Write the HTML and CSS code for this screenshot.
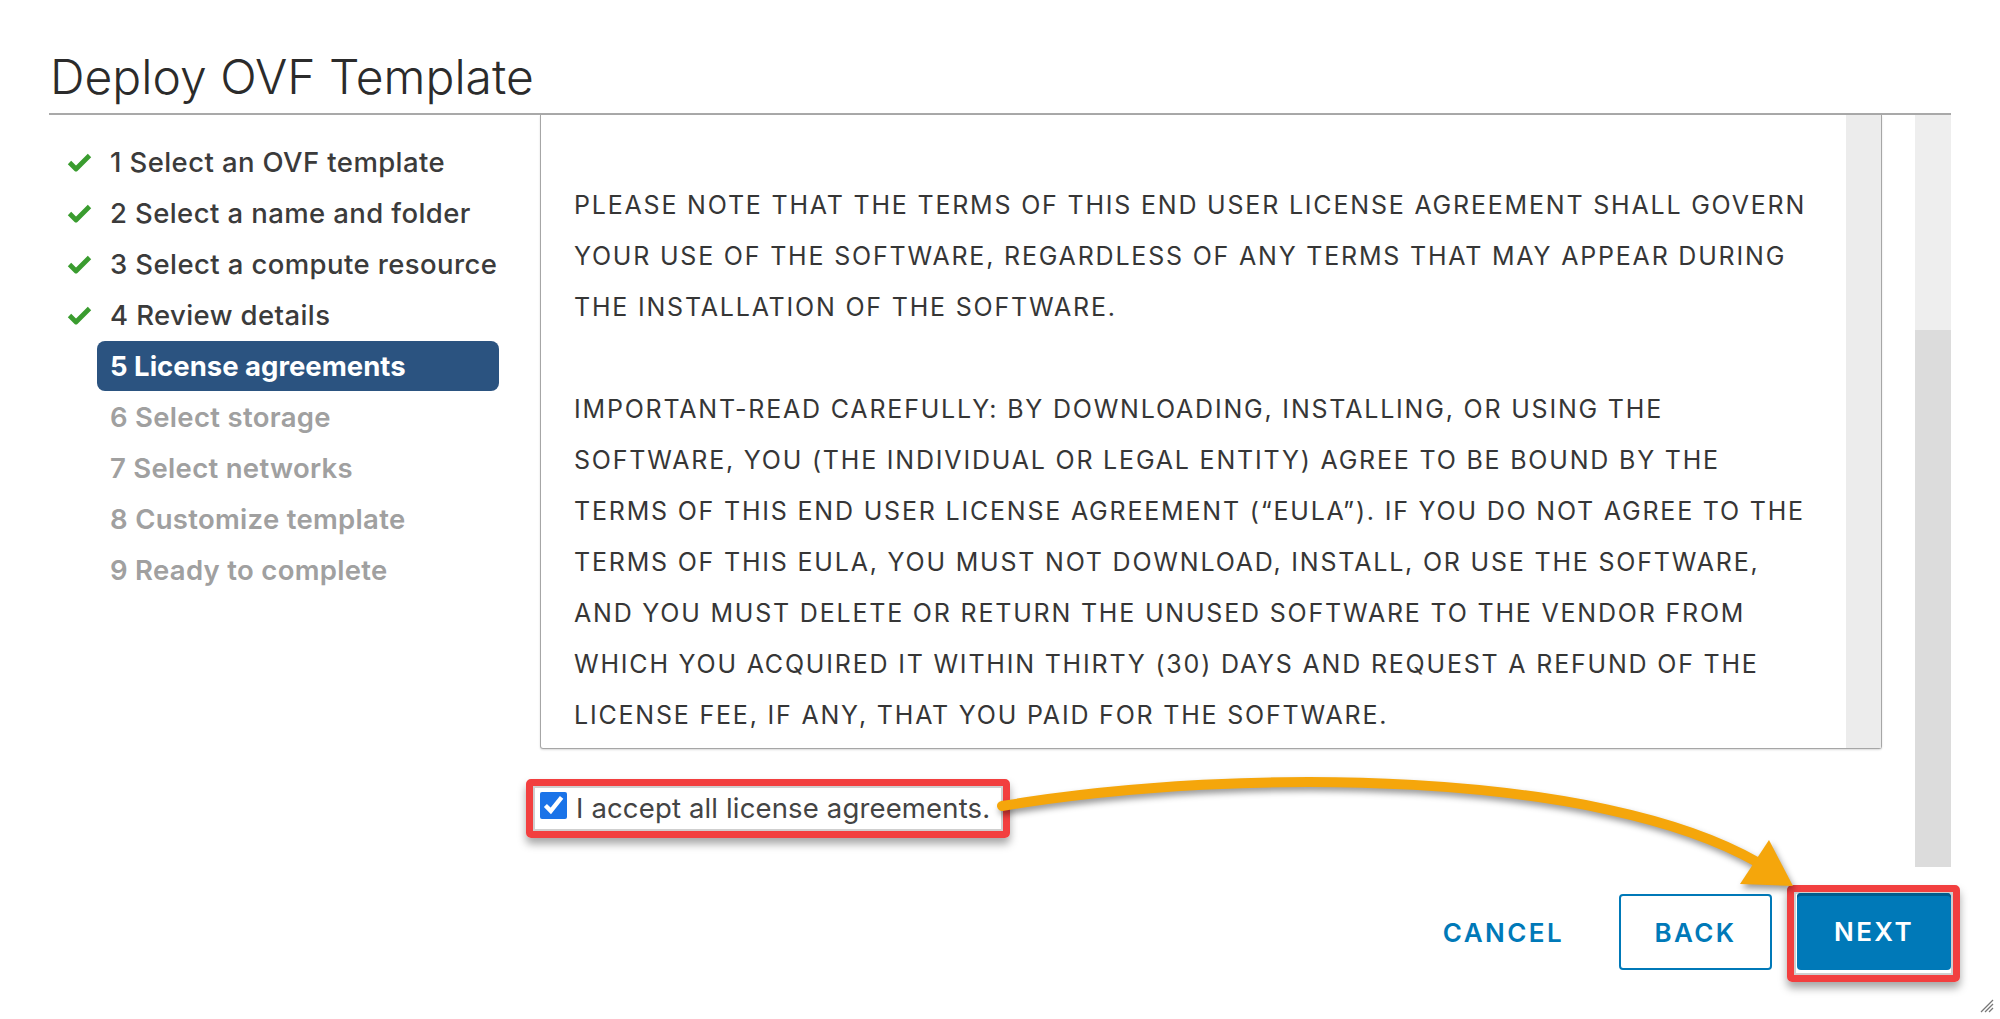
FILE: index.html
```html
<!DOCTYPE html>
<html lang="en">
<head>
<meta charset="utf-8">
<title>Deploy OVF Template</title>
<link rel="stylesheet" href="styles.css">
</head>
<body>
<div class="dialog">
  <header class="header"><h1 class="title">Deploy OVF Template</h1></header>
  <div class="main">
    <nav class="nav">
      <ol class="steps">
        <li class="step done"><svg class="check" viewBox="0 0 25 19"><polyline points="2.5,9.5 9,16 22.5,2.5"/></svg><span>1 Select an OVF template</span></li>
        <li class="step done"><svg class="check" viewBox="0 0 25 19"><polyline points="2.5,9.5 9,16 22.5,2.5"/></svg><span>2 Select a name and folder</span></li>
        <li class="step done"><svg class="check" viewBox="0 0 25 19"><polyline points="2.5,9.5 9,16 22.5,2.5"/></svg><span>3 Select a compute resource</span></li>
        <li class="step done"><svg class="check" viewBox="0 0 25 19"><polyline points="2.5,9.5 9,16 22.5,2.5"/></svg><span>4 Review details</span></li>
        <li class="step current"><span>5 License agreements</span></li>
        <li class="step todo"><span>6 Select storage</span></li>
        <li class="step todo"><span>7 Select networks</span></li>
        <li class="step todo"><span>8 Customize template</span></li>
        <li class="step todo"><span>9 Ready to complete</span></li>
      </ol>
    </nav>
    <section class="pane">
      <div class="pane-content">
        <div class="eula">
          <div class="eula-text">
            <p>PLEASE NOTE THAT THE TERMS OF THIS END USER LICENSE AGREEMENT SHALL GOVERN<br>YOUR USE OF THE SOFTWARE, REGARDLESS OF ANY TERMS THAT MAY APPEAR DURING<br>THE INSTALLATION OF THE SOFTWARE.</p>
            <p>IMPORTANT-READ CAREFULLY: BY DOWNLOADING, INSTALLING, OR USING THE<br>SOFTWARE, YOU (THE INDIVIDUAL OR LEGAL ENTITY) AGREE TO BE BOUND BY THE<br>TERMS OF THIS END USER LICENSE AGREEMENT (“EULA”). IF YOU DO NOT AGREE TO THE<br>TERMS OF THIS EULA, YOU MUST NOT DOWNLOAD, INSTALL, OR USE THE SOFTWARE,<br>AND YOU MUST DELETE OR RETURN THE UNUSED SOFTWARE TO THE VENDOR FROM<br>WHICH YOU ACQUIRED IT WITHIN THIRTY (30) DAYS AND REQUEST A REFUND OF THE<br>LICENSE FEE, IF ANY, THAT YOU PAID FOR THE SOFTWARE.</p>
          </div>
          <div class="eula-scroll"></div>
        </div>
        <label class="accept callout"><input type="checkbox" checked><span class="accept-text">I accept all license agreements.</span></label>
      </div>
      <div class="vscroll"><div class="vthumb"></div></div>
    </section>
  </div>
  <footer class="footer">
    <button class="btn btn-flat">CANCEL</button>
    <button class="btn btn-outline">BACK</button>
    <span class="callout callout-next"><button class="btn btn-primary">NEXT</button></span>
  </footer>
  <svg class="arrow" viewBox="0 0 2000 1019">
    <path class="arrow-line" d="M1002 806 C1250 765 1600 772 1757 862"/>
    <polygon class="arrow-head" points="1793,886 1769,840 1740,884"/>
  </svg>
  <svg class="resize" viewBox="0 0 16 16">
    <line x1="15" y1="3" x2="3" y2="15"/>
    <line x1="15" y1="7" x2="7" y2="15"/>
    <line x1="15" y1="11" x2="11" y2="15"/>
  </svg>
</div>
</body>
</html>
```

FILE: styles.css
```css
* { box-sizing: border-box; }
html, body { margin: 0; padding: 0; }
body {
  width: 2000px;
  height: 1019px;
  overflow: hidden;
  background: #fff;
  font-family: "Inter", "Open Sans", "Liberation Sans", sans-serif;
  color: #333;
}
.dialog {
  position: relative;
  height: 1019px;
  padding: 0 49px;
}
.header {
  height: 115px;
  border-bottom: 2px solid #a9a9a9;
  display: flex;
  align-items: flex-end;
}
.title {
  margin: 0 0 0 1px;
  padding-bottom: 12px;
  font: 300 48px/1 "Inter", sans-serif;
  color: #2b2b2b;
}
.main { display: flex; height: 752px; }
.nav { width: 491px; flex: none; padding-top: 22px; }
.steps {
  list-style: none;
  margin: 0;
  padding: 0;
  display: flex;
  flex-direction: column;
  gap: 1px;
}
.step {
  display: flex;
  align-items: center;
  height: 50px;
  width: 402px;
  margin-left: 48px;
  padding-left: 13px;
  font-size: 27.5px;
  font-weight: 500;
  letter-spacing: 0.4px;
  color: #3b3b3b;
  white-space: nowrap;
}
.check {
  flex: none;
  width: 25px;
  height: 19px;
  margin-left: -43px;
  margin-right: 18px;
  fill: none;
  stroke: #3a9c2f;
  stroke-width: 4.8;
  stroke-linejoin: round;
}
.step.current {
  background: #2b5380;
  color: #fff;
  font-weight: 700;
  letter-spacing: 0;
  border-radius: 8px;
}
.step.todo { color: #a0a0a0; font-weight: 600; letter-spacing: 0.3px; }
.pane { flex: 1; display: flex; }
.pane-content {
  flex: 1;
  display: flex;
  flex-direction: column;
  align-items: flex-start;
}
.eula {
  width: 1342px;
  height: 634px;
  display: flex;
  border: 1px solid #a6a6a6;
  border-top: none;
  border-radius: 0 0 3px 3px;
  box-shadow: 0 1px 2px rgba(0,0,0,.15);
}
.eula-text {
  flex: 1;
  overflow: hidden;
  padding: 65px 0 0 33px;
  font-size: 25px;
  line-height: 51px;
  letter-spacing: 1.8px;
  color: #363636;
  white-space: nowrap;
}
.eula-text p { margin: 0 0 51px; }
.eula-scroll { width: 35px; background: #ececec; }
.callout {
  border: 7px solid #f23f3f;
  border-radius: 5px;
  box-shadow: 0 6px 8px rgba(0,0,0,.35), inset 0 0 0 2px #cfcfcf;
}
.accept {
  display: flex;
  align-items: flex-start;
  margin: 30px 0 0 -14px;
  height: 59px;
  padding: 6px 13px 0 7px;
}
.accept input {
  flex: none;
  width: 27px;
  height: 27px;
  margin: 0 9px 0 0;
  accent-color: #1a73e8;
}
.accept-text {
  padding-top: 3px;
  font-size: 27.5px;
  line-height: 27px;
  letter-spacing: 0.15px;
  color: #444;
  white-space: nowrap;
}
.vscroll {
  width: 36px;
  flex: none;
  background: #eeeeee;
  display: flex;
  flex-direction: column;
}
.vthumb { margin-top: 215px; flex: 1; background: #dcdcdc; }
.footer {
  display: flex;
  justify-content: flex-end;
  align-items: flex-start;
  padding-top: 18px;
}
.btn {
  height: 76px;
  padding: 0 36px;
  border-radius: 4px;
  font-family: "Inter", sans-serif;
  font-size: 26px;
  font-weight: 600;
  letter-spacing: 2.4px;
  text-align: center;
  white-space: nowrap;
  cursor: pointer;
}
.btn-flat {
  margin: 9px 19px 0 0;
  border: none;
  background: transparent;
  color: #0079b8;
}
.btn-outline {
  margin: 9px 15px 0 0;
  width: 153px;
  padding: 0;
  border: 2px solid #0079b8;
  background: #fff;
  color: #0079b8;
}
.callout-next {
  display: block;
  margin-right: -9px;
  padding: 1px 2px 5px 3px;
  border-radius: 5px;
}
.btn-primary {
  display: block;
  width: 154px;
  height: 77px;
  padding: 0;
  border: none;
  background: #0079b8;
  color: #fff;
  box-shadow: inset 0 3px 0 #005c8e;
}
.arrow {
  position: absolute;
  left: 0;
  top: 0;
  width: 2000px;
  height: 1019px;
  pointer-events: none;
  filter: drop-shadow(2px 4px 3px rgba(0,0,0,.4));
}
.arrow-line { fill: none; stroke: #f5a60b; stroke-width: 10; stroke-linecap: round; }
.arrow-head { fill: #f5a60b; }
.resize {
  position: absolute;
  right: 6px;
  bottom: 6px;
  width: 16px;
  height: 16px;
  stroke: #777;
  stroke-width: 1.2;
}
```
